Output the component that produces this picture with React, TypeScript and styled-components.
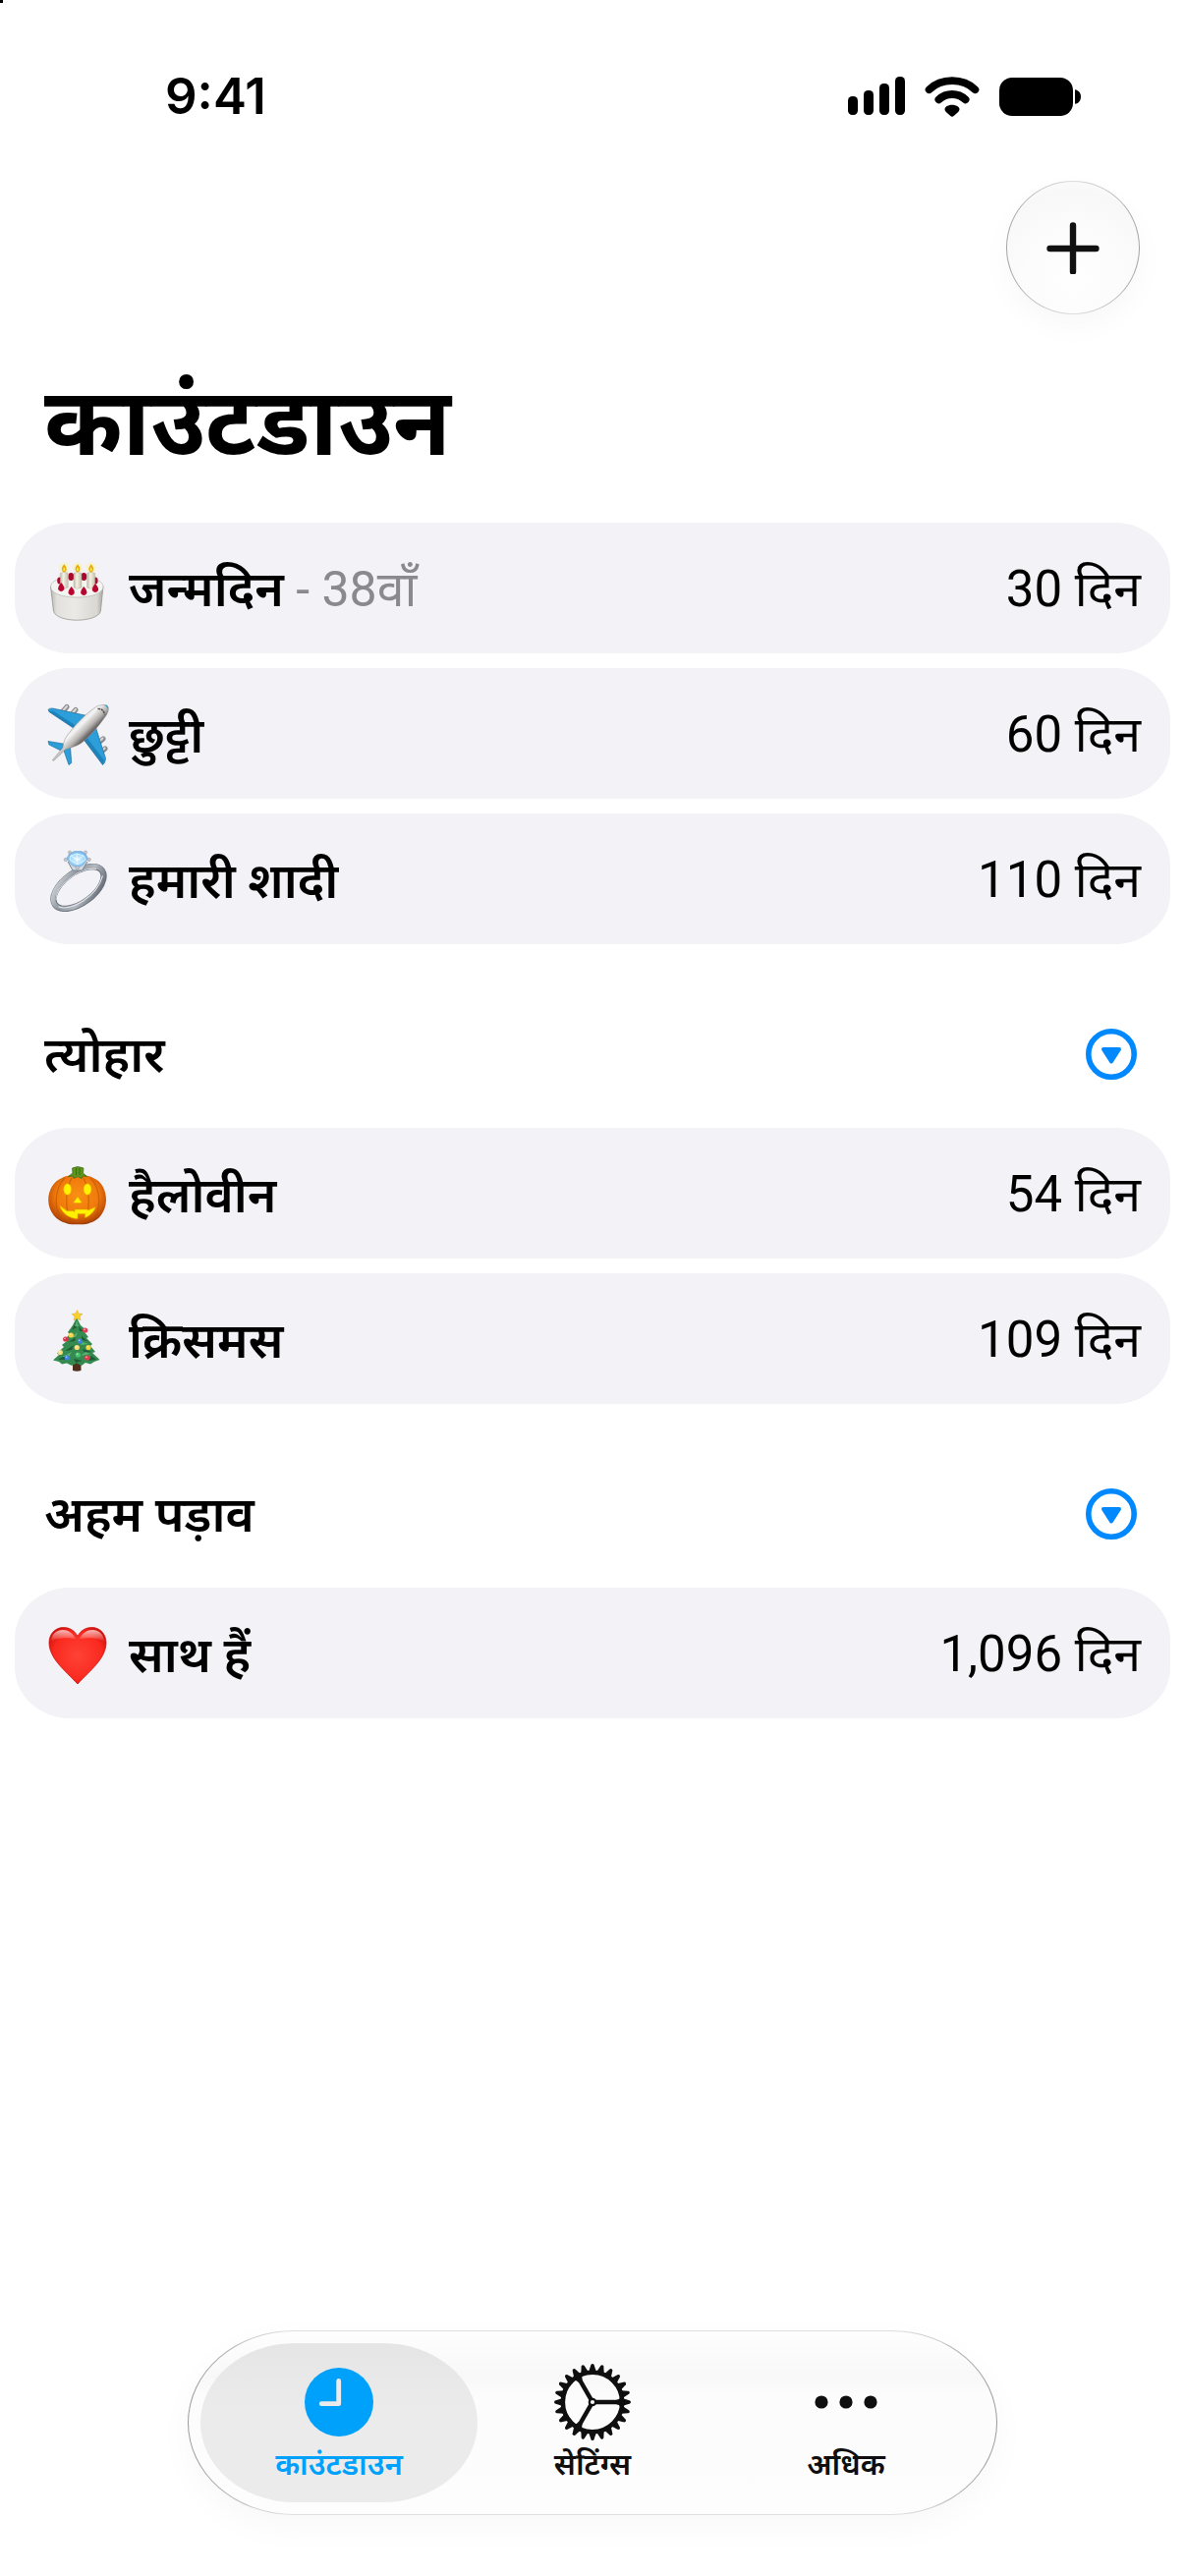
import { ReactNode, useState } from 'react';
import styled, { createGlobalStyle } from 'styled-components';

const GlobalStyle = createGlobalStyle`
    *, *::before, *::after {
        box-sizing: border-box;
    }

    body {
        margin: 0;
        background: #fff;
        color: #000;
        font-family: Inter, 'Noto Sans', 'Noto Sans Devanagari', sans-serif;
    }

    button {
        padding: 0;
        border: 0;
        background: none;
        font: inherit;
        color: inherit;
        cursor: pointer;
    }

    svg {
        display: block;
        flex: none;
    }
`;

const Page = styled.div`
    display: flex;
    flex-direction: column;
    min-height: 100vh;
    background: linear-gradient(#000, #000) 0 0 / 3px 3px no-repeat;
`;

const StatusBar = styled.div`
    display: flex;
    align-items: center;
    justify-content: space-between;
    padding: 67px 106px 0 168px;
`;

const Time = styled.time`
    font-size: 51px;
    line-height: 62px;
    font-weight: 600;
`;

const StatusIcons = styled.div`
    display: flex;
    align-items: center;
    gap: 20px;
`;

const Toolbar = styled.header`
    display: flex;
    justify-content: flex-end;
    padding: 55px 46px 0;
`;

const AddButton = styled.button`
    display: grid;
    place-items: center;
    width: 136px;
    height: 136px;
    border: 1px solid transparent;
    border-radius: 50%;
    background:
        radial-gradient(circle at 50% 75%, #fefefe 0, #fcfcfc 40%, #f8f8f8 75%, #fefefe 100%) padding-box,
        linear-gradient(90deg, #a4a4a4, #dedede 50%, #a4a4a4) border-box;
    box-shadow: 0 12px 30px rgba(0, 0, 0, 0.03);
`;

const Title = styled.h1`
    margin: 50px 45px 46px;
    font-size: 96px;
    line-height: 116px;
    font-weight: 700;
`;

const List = styled.ul`
    display: flex;
    flex-direction: column;
    gap: 15px;
    margin: 0;
    padding: 0 15px;
    list-style: none;
`;

const Row = styled.li`
    display: flex;
    align-items: center;
    gap: 19px;
    height: 133px;
    padding: 0 30px 0 31px;
    border-radius: 56px / 52px;
    background: #f2f2f7;
    font-size: 50px;
    line-height: 62px;
`;

const Name = styled.span`
    flex: 1;
    padding-top: 2px;
    font-weight: 600;
`;

const Note = styled.span`
    color: #8a8a8e;
    font-family: Roboto, 'Noto Sans', 'Noto Sans Devanagari', sans-serif;
    font-weight: 400;
`;

const Days = styled.span`
    padding-top: 2px;
`;

const Count = styled.span`
    font-family: Roboto, 'Noto Sans', sans-serif;
    font-size: 51px;
`;

const SectionHeader = styled.div`
    display: flex;
    align-items: center;
    justify-content: space-between;
    height: 187px;
    padding: 36px 49px 0 45px;
`;

const SectionTitle = styled.h2`
    margin: 0;
    font-size: 50px;
    line-height: 62px;
    font-weight: 600;
`;

const TabBar = styled.nav`
    display: grid;
    grid-template-columns: repeat(3, 1fr);
    width: 100%;
    max-width: 824px;
    margin: auto auto 62px;
    padding: 12px 24px;
    border: 1px solid transparent;
    border-radius: 108px / 94px;
    background:
        linear-gradient(#fefefe, #f8f8f8 25%, #fcfcfc 35%, #fdfdfd) padding-box,
        linear-gradient(90deg, #999, #dedede 12%, #dedede 88%, #999) border-box;
    box-shadow: 0 12px 36px rgba(0, 0, 0, 0.03);
`;

const Tab = styled.button<{ $active: boolean }>`
    display: flex;
    flex-direction: column;
    align-items: center;
    gap: 4px;
    height: 162px;
    margin: 0 -12px;
    padding-top: 20px;
    border-radius: 96px / 81px;
    background: ${({ $active }) => ($active ? 'linear-gradient(#e6e5e6, #ebebeb 40%)' : 'none')};
    color: ${({ $active }) => ($active ? '#00a1fb' : '#0f0f0f')};
    font-size: 31px;
    line-height: 38px;
    font-weight: 600;
`;

const TabIcon = styled.span`
    display: grid;
    place-items: center;
    height: 80px;
`;

const SignalIcon = () => (
    <svg width="58" height="40" viewBox="0 0 58 40" aria-hidden="true">
        <rect x="0" y="20" width="10" height="19" rx="4.5" />
        <rect x="16" y="14" width="10" height="25" rx="4.5" />
        <rect x="32" y="7" width="10" height="32" rx="4.5" />
        <rect x="48" y="0" width="10" height="39" rx="4.5" />
    </svg>
);

const WifiIcon = () => (
    <svg width="56" height="41" viewBox="0 0 56 41" aria-hidden="true">
        <g fill="none" stroke="#000" strokeWidth="7.8" strokeLinecap="round">
            <path d="M4.6 13.2C17 1.2 39 1.2 51.4 13.2" />
            <path d="M14.4 23.4C22 16.2 34 16.2 41.6 23.4" />
        </g>
        <path d="M22 30.6C25.4 28 30.6 28 34 30.6C36 32.2 36 34.4 34.2 36L30 39.8C28.6 41 27.4 41 26 39.8L21.8 36C20 34.4 20 32.2 22 30.6Z" />
    </svg>
);

const BatteryIcon = () => (
    <svg width="83" height="39" viewBox="0 0 83 39" aria-hidden="true">
        <rect width="75" height="39" rx="13" />
        <path d="M77 12.2C81 12.8 83 16 83 19.5S81 26.2 77 26.8Z" />
    </svg>
);

const PlusIcon = () => (
    <svg width="54" height="54" viewBox="0 0 54 54" stroke="#111" strokeWidth="6.4" strokeLinecap="round" aria-hidden="true">
        <path d="M27 4.5V51.5M3.5 28H50.5" />
    </svg>
);

const CollapseIcon = () => (
    <svg width="52" height="52" viewBox="0 0 52 52" aria-hidden="true">
        <circle cx="26" cy="26" r="23.2" fill="none" stroke="#08f" strokeWidth="5.6" />
        <path d="M18 21H34L26 33.5Z" fill="#08f" stroke="#08f" strokeWidth="4" strokeLinejoin="round" />
    </svg>
);

const ClockIcon = () => (
    <svg width="70" height="70" viewBox="0 0 70 70" aria-hidden="true">
        <circle cx="35" cy="35" r="35" fill="#00a1fb" />
        <path d="M34.7 13.5V36.7H17.2" fill="none" stroke="#ebebeb" strokeWidth="4.8" strokeLinecap="round" strokeLinejoin="round" />
    </svg>
);

const teeth = Array.from({ length: 24 }, (_, i) => i * 15);

const GearIcon = () => (
    <svg width="80" height="80" viewBox="-40 -40 80 80" fill="#0f0f0f" aria-hidden="true">
        {teeth.map((angle) => (
            <path key={angle} d="M-3.8 -31L-1.5 -38.2Q0 -40 1.5 -38.2L3.8 -31Z" transform={`rotate(${angle})`} />
        ))}
        <circle r="30.2" fill="none" stroke="#0f0f0f" strokeWidth="4.6" />
        {[0, 120, 240].map((angle) => (
            <path key={angle} d="M3 -2.2H24Q27 -2.3 29 -5V5Q27 2.3 24 2.2H3Z" transform={`rotate(${angle})`} />
        ))}
        <circle r="3.2" fill="none" stroke="#0f0f0f" strokeWidth="2.2" />
    </svg>
);

const MoreIcon = () => (
    <svg width="64" height="14" viewBox="0 0 64 14" fill="#0f0f0f" aria-hidden="true">
        <circle cx="7" cy="7" r="6.6" />
        <circle cx="32" cy="7" r="6.6" />
        <circle cx="57" cy="7" r="6.6" />
    </svg>
);

const Emoji = ({ label, children }: { label: string; children: ReactNode }) => (
    <svg width="66" height="66" viewBox="0 0 66 66" role="img" aria-label={label}>
        {children}
    </svg>
);

const Cake = () => (
    <Emoji label="केक">
        <defs>
            <linearGradient id="cakeSide" x1="0" x2="1" y1="0" y2="0">
                <stop offset="0" stopColor="#b5b4ae" />
                <stop offset="0.12" stopColor="#e2e1dd" />
                <stop offset="0.45" stopColor="#ebeae7" />
                <stop offset="0.88" stopColor="#d8d7d2" />
                <stop offset="1" stopColor="#a5a49e" />
            </linearGradient>
            <linearGradient id="candle" x1="0" x2="1" y1="0" y2="0">
                <stop offset="0" stopColor="#bdbaa4" />
                <stop offset="0.4" stopColor="#f3f1e3" />
                <stop offset="1" stopColor="#c3c0ac" />
            </linearGradient>
        </defs>
        <path d="M5.5 31L8.5 56C10 62 21 65.2 32.3 65.2S55 62 56.4 56L59 31Z" fill="url(#cakeSide)" stroke="#98978f" strokeWidth="0.8" />
        <path d="M5.6 31C5.6 25 17 21 32.3 21S59 25 59 31C59 38 47 42 32.3 42S5.6 38 5.6 31Z" fill="#f4f4f2" stroke="#b5b4ae" strokeWidth="0.7" />
        <g fill="#a8082c">
            <ellipse cx="26.3" cy="21" rx="3" ry="4" />
            <ellipse cx="39.3" cy="21" rx="3" ry="4" />
            <ellipse cx="14.6" cy="25" rx="2.4" ry="3.6" />
            <ellipse cx="51.2" cy="25" rx="2.4" ry="3.6" />
        </g>
        {[19.3, 33, 46.7].map((x) => (
            <g key={x}>
                <ellipse cx={x} cy="12" rx="5" ry="5.5" fill="#fdf3a8" opacity="0.55" />
                <path d={`M${x - 4} 17.5Q${x} 15 ${x + 4} 17.5V32Q${x} 34.5 ${x - 4} 32Z`} fill="url(#candle)" stroke="#b3b09b" strokeWidth="0.4" />
                <path d={`M${x} 8.2Q${x + 5} 14 ${x} 16.8Q${x - 5} 14 ${x} 8.2Z`} fill="#e3a90a" />
                <path d={`M${x} 11Q${x + 2} 14 ${x} 15.5Q${x - 2} 14 ${x} 11Z`} fill="#fbea5a" />
            </g>
        ))}
        <g fill="#b8072f">
            <path d="M16.3 27Q20 31 19.3 34Q16.3 38 13.2 34Q12.6 31 16.3 27Z" />
            <path d="M26.7 31Q30.4 35 29.7 38Q26.7 42 23.6 38Q23 35 26.7 31Z" />
            <path d="M39.3 31Q43 35 42.3 38Q39.3 42 36.2 38Q35.6 35 39.3 31Z" />
            <path d="M51 28Q54.7 32 54 35Q51 39 47.9 35Q47.3 32 51 28Z" />
        </g>
    </Emoji>
);

const Plane = () => (
    <Emoji label="हवाई जहाज़">
        <defs>
            <linearGradient id="fuselage" x1="20" y1="20" x2="42" y2="42" gradientUnits="userSpaceOnUse">
                <stop offset="0.2" stopColor="#cfcfcf" />
                <stop offset="0.45" stopColor="#f5f5f5" />
                <stop offset="0.7" stopColor="#b5b1af" />
                <stop offset="0.85" stopColor="#6c6867" />
            </linearGradient>
        </defs>
        <g stroke="#8b8b8b" strokeWidth="5" strokeLinecap="round">
            <path d="M22 5.5L18.5 9.5M31 8.5L27.5 12.5M59 38L55.5 41M61 48L57.5 51" />
        </g>
        <g stroke="#d8d8d8" strokeWidth="2.2" strokeLinecap="round">
            <path d="M22 5L18.5 9M31 8L27.5 12M58.5 37.5L55 40.5M60.5 47.5L57 50.5" />
        </g>
        <g fill="#2c9fdb" stroke="#1f6d9b" strokeWidth="0.7">
            <path d="M3 8.5Q4 6.8 7.5 7L45 15L31 28.5L4 10.5Z" />
            <path d="M51 25L61.5 58Q61 63 58.5 64.5L39 38.5Z" />
            <path d="M3 40.5L21 43.5L16 50L4 44Z" />
            <path d="M19 50L25.5 46L26.7 62.5L24 64.5Z" />
        </g>
        <path d="M3.5 10L31 28.5L33.5 26L8 9.5Z" fill="#115f94" opacity="0.45" />
        <path d="M58.5 64L39 38.5L42 36L60 60Z" fill="#115f94" opacity="0.45" />
        <path
            d="M52.5 5C57 3 62 3.2 63.3 4.5C65 6.5 64.5 11 61.5 15C53 27 45 36 36.5 42.5C31 46 26 46.5 20.5 49L8.5 60.5L7.3 59.7L18 47C18.5 42 20 37 24 32.5C32 22 43 11 52.5 5Z"
            fill="url(#fuselage)"
            stroke="#8d8a88"
            strokeWidth="0.5"
        />
        <path d="M60 3.6Q64.8 3 64.2 8.5Q63 5 60 3.6Z" fill="#2c9fdb" />
        <path d="M53.5 7.5Q59.5 7 60.5 13.5" fill="none" stroke="#55504e" strokeWidth="1.6" strokeDasharray="2.5 0.7" />
    </Emoji>
);

const Ring = () => (
    <Emoji label="अंगूठी">
        <defs>
            <linearGradient id="band" x1="0" y1="0" x2="1" y2="1">
                <stop offset="0" stopColor="#dfe2e6" />
                <stop offset="0.35" stopColor="#8f969f" />
                <stop offset="0.6" stopColor="#b4b9c0" />
                <stop offset="1" stopColor="#505862" />
            </linearGradient>
            <radialGradient id="stone">
                <stop offset="0" stopColor="#e8faff" />
                <stop offset="0.55" stopColor="#a5dcfb" />
                <stop offset="1" stopColor="#6fb4ee" />
            </radialGradient>
        </defs>
        <g transform="rotate(-36 34 41.5)" fill="none">
            <ellipse cx="34" cy="41.5" rx="29.5" ry="15.5" stroke="#666e78" strokeWidth="6.2" />
            <ellipse cx="34" cy="41.2" rx="29.7" ry="15.7" stroke="url(#band)" strokeWidth="4.6" />
            <path d="M6 45C12 56.5 44 60 61 46" stroke="#e4e6e9" strokeWidth="1.1" />
            <path d="M8 38C16 26 48 25 60 37" stroke="#d9dce0" strokeWidth="1" />
        </g>
        <path d="M23 15L28 24H37.5L43 15" fill="#d3d8de" stroke="#7d858f" strokeWidth="1" />
        <path d="M24.5 7L29.5 4.5H37L41.5 7.5L43.5 12L38.5 18.5L32.7 21L27 18.5L21.8 12Z" fill="url(#stone)" stroke="#7ba7cf" strokeWidth="0.6" />
        <path d="M26 9L32 7L39 9L41 13L33 18L25 13ZM32 7L33 18M26 9L33 13L39 9" fill="none" stroke="#fff" strokeWidth="0.8" opacity="0.85" />
        <g fill="#c2c7ce" stroke="#858c95" strokeWidth="0.4">
            <circle cx="25" cy="5.5" r="1.6" />
            <circle cx="41" cy="5.5" r="1.6" />
            <circle cx="20.8" cy="13" r="1.7" />
            <circle cx="44.7" cy="13" r="1.7" />
            <circle cx="32.7" cy="21" r="1.8" />
        </g>
    </Emoji>
);

const Pumpkin = () => (
    <Emoji label="कद्दू">
        <defs>
            <radialGradient id="pumpkin" cx="0.5" cy="0.4" r="0.62">
                <stop offset="0" stopColor="#fa8f13" />
                <stop offset="0.6" stopColor="#f07a0c" />
                <stop offset="0.9" stopColor="#bd4c06" />
                <stop offset="1" stopColor="#8a3304" />
            </radialGradient>
        </defs>
        <path
            d="M33 16C38 13.5 45 14 49 17C57 20 62.2 29 62 40C61.5 52 54 60.5 46 62.5C41 64.8 37 64.3 33 64.3S25 64.8 20 62.5C12 60.5 3.5 52 3.2 40C3 29 9 20 17 17C21 14 28 13.5 33 16Z"
            fill="url(#pumpkin)"
        />
        <g fill="none" stroke="#b85205" strokeWidth="1.2" opacity="0.6">
            <path d="M20 17C9 28 8 50 19 62M27 17C20 30 20 50 27 64M46 17C57 28 58 50 47 62M39 17C46 30 46 50 39 64" />
        </g>
        <path d="M23.5 15.5L28 12L27.5 7Q33 4 39 7L38.5 12L42.5 15.5L38.5 15L37 17.5L33 15.5L29 17.5L28 15Z" fill="#5d9420" stroke="#3c6a10" strokeWidth="0.7" />
        <path d="M31.5 7V14M35 7V14" stroke="#35600e" strokeWidth="0.8" />
        <g fill="#fff200" stroke="#e8a500" strokeWidth="0.6">
            <ellipse cx="22.7" cy="28.5" rx="4" ry="5.8" />
            <ellipse cx="43" cy="28.5" rx="4" ry="5.8" />
            <path d="M33 36L37 41.5Q37 42.5 36 42.5H30Q29 42.5 29 41.5Z" />
            <path d="M14.7 45L22 50.5H28.5L30 51.5V49H43.5V50L51.3 46.5C50 51 46 55.5 40.5 57.5V53.5H33V58.5C24.5 58.5 17 53 14.7 45Z" />
        </g>
    </Emoji>
);

const baubles = [
    { x: 40.7, y: 24, fill: '#e8394f' },
    { x: 26.3, y: 29, fill: '#f5d34b' },
    { x: 20.7, y: 33, fill: '#d9334a' },
    { x: 35.3, y: 35, fill: '#3f82e0' },
    { x: 32.3, y: 41.5, fill: '#f7dd7a' },
    { x: 44, y: 41.5, fill: '#f7d441' },
    { x: 15.3, y: 46.5, fill: '#f7dd7a' },
    { x: 33.3, y: 49, fill: '#45c46c' },
    { x: 22.3, y: 52, fill: '#3f82e0' },
    { x: 42.7, y: 52, fill: '#e8394f' },
];

const Tree = () => (
    <Emoji label="क्रिसमस ट्री">
        <path d="M28 54H36.5V65Q32.2 66.3 28 65Z" fill="#4f2f1c" />
        <path
            d="M32 11L36 19L42 24L40 26L44 31L42 32L48 38L46 40L51 46L48 47L55.5 54L50 56L46 58.5L41 57L37 60L32 57.5L27 60L22 57.5L17 58.5L14 56L8 54.5L14 49L12 47.5L19 41L17 39L22 35L20 33L25 28L23 26L28 19Z"
            fill="#358a4f"
        />
        <path
            d="M31 16L27 24L32 21ZM34 20L39 25L35 25ZM24 36L31 31L30 35ZM37 30L43 35L37 34ZM20 45L29 39L27 44ZM38 43L47 46L40 47ZM13 54L23 48L20 54ZM29 53L38 55L31 57ZM44 55L52 54L47 50Z"
            fill="#1d5c36"
        />
        <path d="M32 14L34 20L30 20ZM26 31L33 26L31 31ZM36 39L44 38L38 36ZM17 51L27 46L24 51ZM36 50L46 48L41 46Z" fill="#57b070" />
        {baubles.map(({ x, y, fill }) => (
            <g key={`${x}-${y}`}>
                <circle cx={x} cy={y} r="2.6" fill={fill} />
                <circle cx={x - 0.7} cy={y - 0.8} r="0.8" fill="#fff" opacity="0.7" />
            </g>
        ))}
        <path d="M32.5 3.5L34 7L38 7.4L35 10L36 14L32.5 12L29 14L30 10L27 7.4L31 7Z" fill="#f8cf2c" stroke="#dca614" strokeWidth="0.5" />
    </Emoji>
);

const Heart = () => (
    <Emoji label="दिल">
        <defs>
            <radialGradient id="heart" cx="0.5" cy="0.5" r="0.6">
                <stop offset="0" stopColor="#ff4236" />
                <stop offset="0.7" stopColor="#fa2a20" />
                <stop offset="1" stopColor="#cf100b" />
            </radialGradient>
            <linearGradient id="heartShine" x1="0" x2="0" y1="0" y2="1">
                <stop offset="0" stopColor="#fff" stopOpacity="0.7" />
                <stop offset="1" stopColor="#fff" stopOpacity="0" />
            </linearGradient>
        </defs>
        <path
            d="M33 15.5C36 9.5 41.5 6.5 47.5 6.5C56 6.5 62 13.5 62 22C62 38 46 50 33 64C20 50 4 38 4 22C4 13.5 10 6.5 18.5 6.5C24.5 6.5 30 9.5 33 15.5Z"
            fill="url(#heart)"
            stroke="#c8140f"
            strokeWidth="0.8"
        />
        <path d="M6 21C6 13 12 9 18 9C23 9 28 12 31 18C24 17 12 16 6 21ZM60 21C60 13 54 9 48 9C43 9 38 12 35 18C42 17 54 16 60 21Z" fill="url(#heartShine)" />
    </Emoji>
);

interface Countdown {
    name: string;
    note?: string;
    days: string;
    icon: ReactNode;
}

interface Section {
    title?: string;
    items: Countdown[];
}

const sections: Section[] = [
    {
        items: [
            { name: 'जन्मदिन', note: '38वाँ', days: '30', icon: <Cake /> },
            { name: 'छुट्टी', days: '60', icon: <Plane /> },
            { name: 'हमारी शादी', days: '110', icon: <Ring /> },
        ],
    },
    {
        title: 'त्योहार',
        items: [
            { name: 'हैलोवीन', days: '54', icon: <Pumpkin /> },
            { name: 'क्रिसमस', days: '109', icon: <Tree /> },
        ],
    },
    {
        title: 'अहम पड़ाव',
        items: [{ name: 'साथ हैं', days: '1,096', icon: <Heart /> }],
    },
];

const tabs = [
    { id: 'countdown', label: 'काउंटडाउन', icon: <ClockIcon /> },
    { id: 'settings', label: 'सेटिंग्स', icon: <GearIcon /> },
    { id: 'more', label: 'अधिक', icon: <MoreIcon /> },
];

const CountdownSection = ({ title, items }: Section) => {
    const [open, setOpen] = useState(true);

    return (
        <section>
            {title && (
                <SectionHeader>
                    <SectionTitle>{title}</SectionTitle>
                    <button type="button" aria-label={title} aria-expanded={open} onClick={() => setOpen(!open)}>
                        <CollapseIcon />
                    </button>
                </SectionHeader>
            )}
            {open && (
                <List>
                    {items.map(({ name, note, days, icon }) => (
                        <Row key={name}>
                            {icon}
                            <Name>
                                {name}
                                {note && <Note> - {note}</Note>}
                            </Name>
                            <Days>
                                <Count>{days} </Count>
                                दिन
                            </Days>
                        </Row>
                    ))}
                </List>
            )}
        </section>
    );
};

const App = () => {
    const [activeTab, setActiveTab] = useState('countdown');

    return (
        <Page lang="hi">
            <GlobalStyle />
            <StatusBar>
                <Time>9:41</Time>
                <StatusIcons>
                    <SignalIcon />
                    <WifiIcon />
                    <BatteryIcon />
                </StatusIcons>
            </StatusBar>
            <Toolbar>
                <AddButton type="button" aria-label="जोड़ें">
                    <PlusIcon />
                </AddButton>
            </Toolbar>
            <main>
                <Title>काउंटडाउन</Title>
                {sections.map((section) => (
                    <CountdownSection key={section.title ?? 'main'} {...section} />
                ))}
            </main>
            <TabBar>
                {tabs.map(({ id, label, icon }) => (
                    <Tab key={id} type="button" $active={id === activeTab} onClick={() => setActiveTab(id)}>
                        <TabIcon>{icon}</TabIcon>
                        {label}
                    </Tab>
                ))}
            </TabBar>
        </Page>
    );
};

export default App;
